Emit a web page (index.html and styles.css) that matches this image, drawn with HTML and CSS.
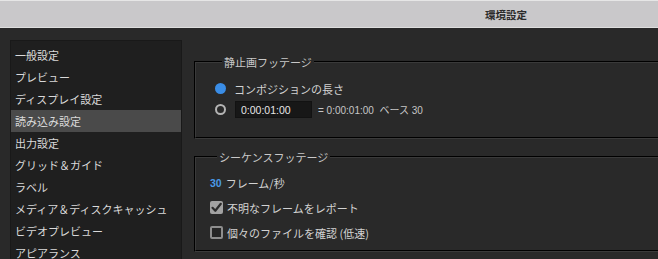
FILE: index.html
```html
<!DOCTYPE html>
<html lang="ja">
<head>
    <meta charset="UTF-8">
    <meta name="viewport" content="width=device-width, initial-scale=1.0">
    <title>環境設定</title>
    <link rel="stylesheet" href="styles.css">
</head>
<body>
    <div class="titlebar">
        <span class="title">環境設定</span>
    </div>

    <div class="main">
        <ul class="sidebar">
            <li>一般設定</li>
            <li>プレビュー</li>
            <li>ディスプレイ設定</li>
            <li class="selected">読み込み設定</li>
            <li>出力設定</li>
            <li>グリッド＆ガイド</li>
            <li>ラベル</li>
            <li>メディア＆ディスクキャッシュ</li>
            <li>ビデオプレビュー</li>
            <li>アピアランス</li>
        </ul>

        <div class="panel">
            <fieldset class="group still">
                <legend>静止画フッテージ</legend>
                <div class="row">
                    <span class="radio on"></span>
                    <span class="label">コンポジションの長さ</span>
                </div>
                <div class="row">
                    <span class="radio"></span>
                    <input type="text" class="timecode" value="0:00:01:00">
                    <span class="info">= 0:00:01:00&nbsp;&nbsp;ベース 30</span>
                </div>
            </fieldset>

            <fieldset class="group sequence">
                <legend>シーケンスフッテージ</legend>
                <div class="row">
                    <span class="value">30</span>
                    <span class="label">フレーム/秒</span>
                </div>
                <div class="row">
                    <span class="check on">
                        <svg width="13" height="13" viewBox="0 0 13 13">
                            <path d="M2.5 6.8 L5.3 9.8 L10.8 2.8" fill="none" stroke="#2b2b2b" stroke-width="2.2" stroke-linecap="round" stroke-linejoin="round"/>
                        </svg>
                    </span>
                    <span class="label">不明なフレームをレポート</span>
                </div>
                <div class="row">
                    <span class="check"></span>
                    <span class="label">個々のファイルを確認 (低速)</span>
                </div>
            </fieldset>
        </div>
    </div>
</body>
</html>
```

FILE: styles.css
```css
body {
    margin: 0;
    height: 259px;
    overflow: hidden;
    background-color: #292929;
    font-family: "Liberation Sans", "Noto Sans CJK JP", sans-serif;
    font-size: 11px;
    color: #d4d4d4;
}
.titlebar {
    height: 26px;
    display: flex;
    align-items: center;
    padding-left: 485px;
    background-color: #c9c8ca;
    border-top: 1px solid #e6e6e6;
    border-bottom: 1px solid #dedede;
}
.title {
    font-family: "Noto Sans CJK JP", sans-serif;
    font-size: 10.5px;
    font-weight: bold;
    color: #2c2c2c;
}
.main {
    display: flex;
    align-items: flex-start;
    padding: 12px 0 0 10px;
}
.sidebar {
    list-style: none;
    margin: 0;
    padding: 3px 0 0 0;
    width: 170px;
    background-color: #1f1f1f;
    border: 1px solid #191919;
    font-family: "Noto Sans CJK JP", sans-serif;
}
.sidebar li {
    height: 22px;
    line-height: 22px;
    padding-left: 4px;
    color: #dadada;
    white-space: nowrap;
}
.sidebar li.selected {
    background-color: #4a4a4a;
}
.panel {
    flex: 1;
    padding: 14px 0 0 12px;
}
.group {
    margin: 0 -4px 0 0;
    padding: 0;
    border: 2px groove #3a3a3a;
}
.group legend {
    margin-left: 7px;
    padding: 0 2px;
    line-height: 16px;
    font-family: "Noto Sans CJK JP", sans-serif;
    color: #c8c8c8;
}
.still {
    padding: 8px 0 17px 19px;
}
.sequence {
    margin-top: 10px;
    padding: 5px 0 5px 14px;
}
.still .row {
    height: 21px;
}
.sequence .row {
    height: 25px;
}
.row {
    display: flex;
    align-items: center;
}
.label {
    font-family: "Noto Sans CJK JP", sans-serif;
    color: #d2d2d2;
    white-space: nowrap;
}
.radio {
    width: 7px;
    height: 7px;
    border: 2px solid #b4b4b4;
    border-radius: 50%;
    margin-right: 8px;
    flex-shrink: 0;
}
.radio.on {
    width: 11px;
    height: 11px;
    border: none;
    background-color: #3a8de6;
}
.timecode {
    box-sizing: border-box;
    width: 77px;
    height: 17px;
    margin: 0 6px 0 1px;
    padding: 0 0 0 5px;
    background-color: #171717;
    border: 1px solid #121212;
    color: #e6e6e6;
    font-family: "Liberation Sans", sans-serif;
    font-size: 10.5px;
}
.info {
    font-family: "Liberation Sans", "Noto Sans CJK JP", sans-serif;
    font-size: 10px;
    color: #c6c6c6;
}
.value {
    margin-right: 4px;
    color: #4a9ae8;
    font-weight: bold;
    font-size: 10.5px;
}
.check {
    box-sizing: border-box;
    width: 13px;
    height: 13px;
    margin-right: 4px;
    border: 2px solid #8e8e8e;
    border-radius: 2px;
    background-color: #262626;
    flex-shrink: 0;
}
.check.on {
    border: none;
    background-color: #a2a2a2;
}
.check svg {
    display: block;
}
```
